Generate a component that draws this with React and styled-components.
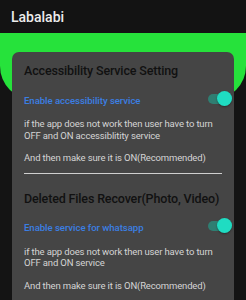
import React from 'react';
import styled, { createGlobalStyle } from 'styled-components';

const GlobalStyle = createGlobalStyle`
  html, body {
    margin: 0;
    padding: 0;
    background: #141414;
    font-family: Roboto, "Liberation Sans", sans-serif;
    overflow: hidden;
  }
`;

const Screen = styled.div`
  width: 246px;
  height: 300px;
  background: #141414;
  overflow: hidden;
`;

const AppBar = styled.div`
  height: 33px;
  display: flex;
  align-items: center;
  padding: 0 11px;
  background: #131313;
  color: #ececec;
  font-size: 14px;
  font-weight: 500;
  box-sizing: border-box;
`;

const Hero = styled.div`
  height: 67px;
  background: #26e23b;
  border-radius: 0 0 34px 34px;
`;

const Card = styled.div`
  margin: -48px 12px 0;
  padding: 11px 12px 12px;
  background: #454545;
  border-radius: 7px;
`;

const Heading = styled.div`
  font-size: 12.5px;
  line-height: 16px;
  letter-spacing: -0.15px;
  font-weight: 500;
  color: #111;
  white-space: nowrap;
  margin-top: ${(p) => (p.$first ? 0 : '17px')};
`;

const SwitchRow = styled.div`
  display: flex;
  align-items: center;
  justify-content: space-between;
  height: 20px;
  margin: 11px -10px 0 0;
`;

const Link = styled.span`
  font-size: 9.6px;
  letter-spacing: -0.05px;
  font-weight: 500;
  color: #3b7fe3;
`;

const Track = styled.span`
  position: relative;
  display: inline-block;
  width: 24px;
  height: 10px;
  border-radius: 5px;
  background: #2f7e72;
  margin-top: -3px;
`;

const Thumb = styled.span`
  position: absolute;
  right: 0;
  top: -3px;
  width: 15px;
  height: 15px;
  border-radius: 50%;
  background: #1fdcc2;
  box-shadow: 0 1px 2px rgba(0, 0, 0, 0.35);
`;

const Body = styled.p`
  margin: ${(p) => (p.$gap ? '11px' : '8px')} 0 0;
  font-size: 9.5px;
  letter-spacing: -0.15px;
  line-height: 11.5px;
  color: #d4d4d4;
  white-space: nowrap;
`;

const Divider = styled.hr`
  margin: 9px 0 0;
  border: 0;
  height: 1px;
  background: #cfcfcf;
`;

const sections = [
  {
    title: 'Accessibility Service Setting',
    link: 'Enable accessibility service',
    text: ['if the app does not work then user have to turn', 'OFF and ON accessiblitity service'],
  },
  {
    title: 'Deleted Files Recover(Photo, Video)',
    link: 'Enable service for whatsapp',
    text: ['if the app does not work then user have to turn', 'OFF and ON service'],
  },
];

const Toggle = () => (
  <Track>
    <Thumb />
  </Track>
);

const App = () => (
  <Screen>
    <GlobalStyle />
    <AppBar>Labalabi</AppBar>
    <Hero />
    <Card>
      {sections.map((s, i) => (
        <React.Fragment key={s.title}>
          <Heading $first={i === 0}>{s.title}</Heading>
          <SwitchRow>
            <Link>{s.link}</Link>
            <Toggle />
          </SwitchRow>
          <Body>
            {s.text[0]}
            <br />
            {s.text[1]}
          </Body>
          <Body $gap>And then make sure it is ON(Recommended)</Body>
          <Divider />
        </React.Fragment>
      ))}
    </Card>
  </Screen>
);

export default App;
